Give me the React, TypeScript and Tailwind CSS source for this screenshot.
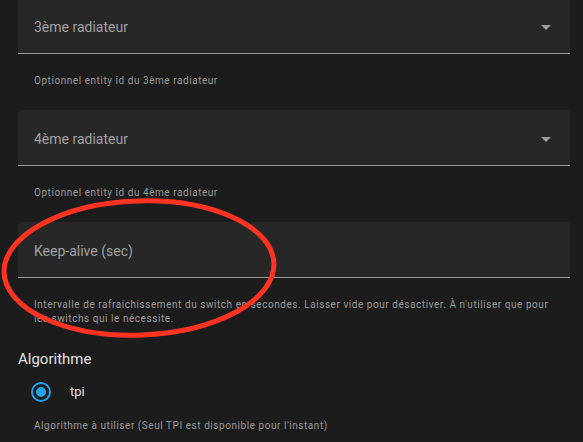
import React from "react";

function Arrow() {
  return (
    <svg width="10" height="5" viewBox="0 0 10 5" className="mt-[3px]">
      <path d="M0 0 L10 0 L5 5 Z" fill="#9e9e9e" />
    </svg>
  );
}

function Field({ label, select }: { label: string; select?: boolean }) {
  return (
    <div className="h-[56px] bg-[#272727] rounded-t-[4px] border-b border-[#9c9c9c] flex items-center justify-between pl-[16px] pr-[19px]">
      <span className="pt-[3px] text-[14px] text-[#a0a0a0]">{label}</span>
      {select && <Arrow />}
    </div>
  );
}

function Helper({ children }: { children: React.ReactNode }) {
  return (
    <div className="px-[16px] pt-[20px] text-[10px] leading-[14px] tracking-[0.55px] text-[#9a9a9a]">
      {children}
    </div>
  );
}

export default function App() {
  return (
    <div
      className="relative w-[583px] h-[442px] overflow-hidden bg-[#1c1c1c]"
      style={{ fontFamily: "Roboto, 'Noto Sans', sans-serif" }}
    >
      <div className="flex flex-col pl-[18px] pr-[13px] -mt-[2px]">
        <Field label="3ème radiateur" select />
        <Helper>Optionnel entity id du 3ème radiateur</Helper>
        <div className="mt-[22px]">
          <Field label="4ème radiateur" select />
        </div>
        <Helper>Optionnel entity id du 4ème radiateur</Helper>
        <div className="mt-[22px]">
          <Field label="Keep-alive (sec)" />
        </div>
        <Helper>
          Intervalle de rafraichissement du switch en secondes. Laisser vide pour désactiver. À n'utiliser que pour
          les switchs qui le nécessite.
        </Helper>
        <div className="mt-[23px] text-[15px] leading-[20px] text-[#e1e1e1]">Algorithme</div>
        <div className="mt-[3px] h-[40px] flex items-center pl-[13px]">
          <div className="w-[20px] h-[20px] rounded-full border-2 border-[#22a1ee] flex items-center justify-center">
            <div className="w-[10px] h-[10px] rounded-full bg-[#22a1ee]" />
          </div>
          <span className="ml-[19px] text-[13px] text-[#e1e1e1]">tpi</span>
        </div>
        <div className="mt-[7px] px-[16px] text-[10px] leading-[14px] tracking-[0.55px] text-[#9a9a9a]">
          Algorithme à utiliser (Seul TPI est disponible pour l'instant)
        </div>
      </div>
      <svg className="absolute inset-0 pointer-events-none" width="583" height="442">
        <ellipse
          cx="139"
          cy="268"
          rx="135"
          ry="67"
          fill="none"
          stroke="#ff3322"
          strokeWidth="5"
          transform="rotate(-2 139 268)"
        />
      </svg>
    </div>
  );
}
